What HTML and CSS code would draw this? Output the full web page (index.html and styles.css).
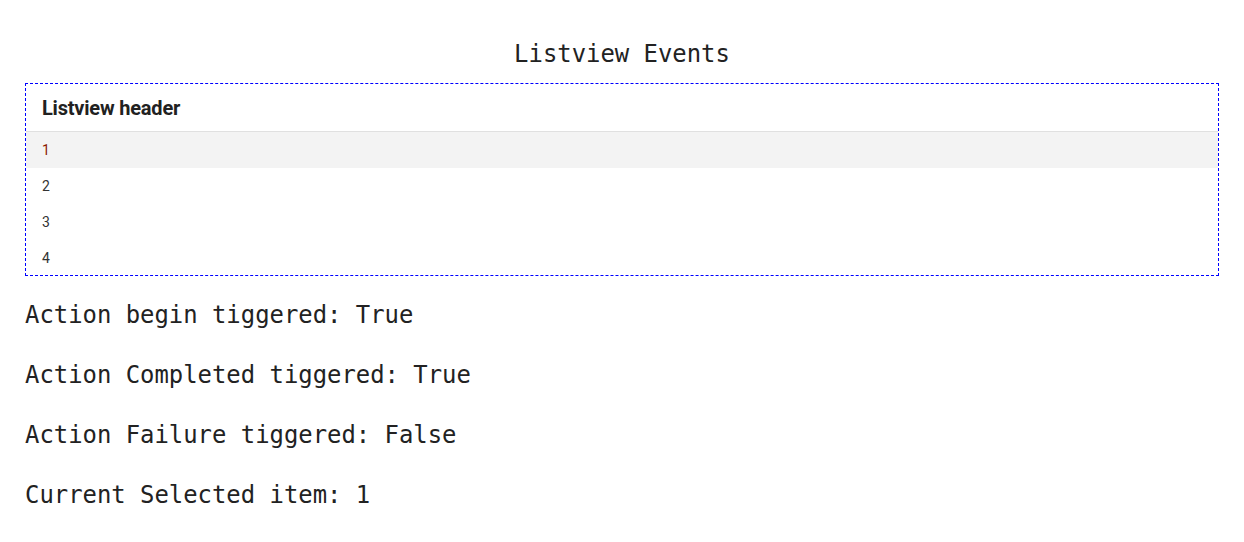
FILE: index.html
```html
<!DOCTYPE html>
<html>
<head>
<meta charset="utf-8">
<link rel="stylesheet" href="styles.css">
</head>
<body>
<main class="page">
  <h1 class="title">Listview Events</h1>
  <div class="listview">
    <div class="lv-header">Listview header</div>
    <ul class="lv-list">
      <li class="lv-item selected">1</li>
      <li class="lv-item">2</li>
      <li class="lv-item">3</li>
      <li class="lv-item">4</li>
    </ul>
  </div>
  <div class="events">
    <p class="event">Action begin tiggered: True</p>
    <p class="event">Action Completed tiggered: True</p>
    <p class="event">Action Failure tiggered: False</p>
    <p class="event">Current Selected item: 1</p>
  </div>
</main>
</body>
</html>
```
FILE: styles.css
```css
html, body {
  margin: 0;
  padding: 0;
  background: #ffffff;
}
.page {
  padding: 36px 25px 0 25px;
  font-family: "DejaVu Sans Mono", "Liberation Mono", monospace;
  color: #222222;
}
.title {
  margin: 0 0 11px 0;
  text-align: center;
  font-size: 23.9px;
  font-weight: normal;
  line-height: 36px;
}
.listview {
  border: 1px dashed #0000ff;
  font-family: Roboto, "Noto Sans", sans-serif;
}
.lv-header {
  height: 47px;
  padding: 0 16px;
  display: flex;
  align-items: center;
  font-size: 20px;
  font-weight: bold;
  letter-spacing: -0.2px;
  color: #212121;
  border-bottom: 1px solid #e0e0e0;
}
.lv-list {
  list-style: none;
  margin: 0;
  padding: 0;
}
.lv-item {
  height: 36px;
  padding: 0 16px;
  display: flex;
  align-items: center;
  font-size: 14px;
  color: #333333;
}
.lv-item:last-child {
  height: 35px;
}
.lv-item.selected {
  background: #f3f3f3;
  color: #8b1a00;
}
.events {
  margin-top: 21px;
  display: flex;
  flex-direction: column;
  gap: 24px;
}
.event {
  margin: 0;
  font-size: 23.9px;
  line-height: 36px;
}
```
